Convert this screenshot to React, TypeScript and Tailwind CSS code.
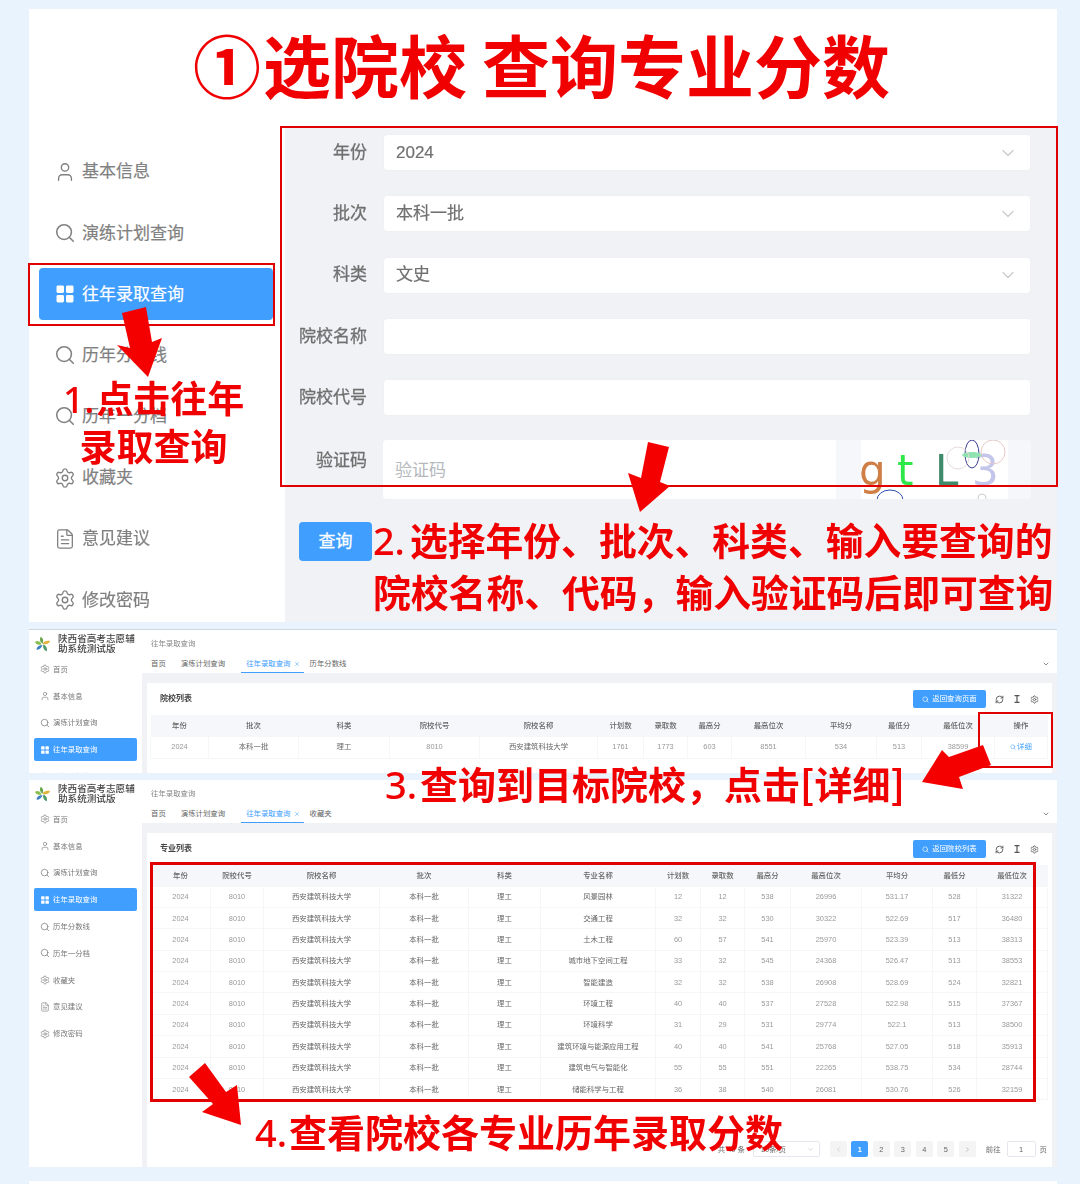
import React from 'react';
import { ChevronDown, ChevronLeft, ChevronRight, FileText, RefreshCw, Search, Settings, User, X } from 'lucide-react';

const SIDE_ITEMS = [
  { label: '基本信息', icon: 'user' },
  { label: '演练计划查询', icon: 'search' },
  { label: '往年录取查询', icon: 'grid', active: true },
  { label: '历年分数线', icon: 'search' },
  { label: '历年一分档', icon: 'search' },
  { label: '收藏夹', icon: 'gear' },
  { label: '意见建议', icon: 'file' },
  { label: '修改密码', icon: 'gear' },
];

const FORM_ROWS = [
  { label: '年份', value: '2024', select: true },
  { label: '批次', value: '本科一批', select: true },
  { label: '科类', value: '文史', select: true },
  { label: '院校名称', value: '' },
  { label: '院校代号', value: '' },
];

const SCHOOL_COLS = ['w-[58px]', 'w-[90px]', 'w-[91px]', 'w-[90px]', 'w-[118px]', 'w-[46px]', 'w-[44px]', 'w-[44px]', 'w-[74px]', 'w-[71px]', 'w-[45px]', 'w-[73px]', 'w-[53px]'];
const SCHOOL_HEAD = ['年份', '批次', '科类', '院校代号', '院校名称', '计划数', '录取数', '最高分', '最高位次', '平均分', '最低分', '最低位次', '操作'];
const SCHOOL_ROW = ['2024', '本科一批', '理工', '8010', '西安建筑科技大学', '1761', '1773', '603', '8551', '534', '513', '38599'];

const MAJOR_COLS = ['w-[60px]', 'w-[53px]', 'w-[116px]', 'w-[89px]', 'w-[72px]', 'w-[115px]', 'w-[45px]', 'w-[44px]', 'w-[46px]', 'w-[71px]', 'w-[71px]', 'w-[44px]', 'w-[71px]'];
const MAJOR_HEAD = ['年份', '院校代号', '院校名称', '批次', '科类', '专业名称', '计划数', '录取数', '最高分', '最高位次', '平均分', '最低分', '最低位次'];
const MAJORS = [
  ['风景园林', '12', '12', '538', '26996', '531.17', '528', '31322'],
  ['交通工程', '32', '32', '530', '30322', '522.69', '517', '36480'],
  ['土木工程', '60', '57', '541', '25970', '523.39', '513', '38313'],
  ['城市地下空间工程', '33', '32', '545', '24368', '526.47', '513', '38553'],
  ['智能建造', '32', '32', '538', '26908', '528.69', '524', '32821'],
  ['环境工程', '40', '40', '537', '27528', '522.98', '515', '37367'],
  ['环境科学', '31', '29', '531', '29774', '522.1', '513', '38500'],
  ['建筑环境与能源应用工程', '40', '40', '541', '25768', '527.05', '518', '35913'],
  ['建筑电气与智能化', '55', '55', '551', '22265', '538.75', '534', '28744'],
  ['储能科学与工程', '36', '38', '540', '26081', '530.76', '526', '32159'],
];

function GridIcon({ className }: { className: string }) {
  return (
    <svg viewBox="0 0 22 22" className={className} fill="currentColor">
      <rect x="2.5" y="2.5" width="7.5" height="7.5" rx="1.4" />
      <rect x="12" y="2.5" width="7.5" height="7.5" rx="1.4" />
      <rect x="2.5" y="12" width="7.5" height="7.5" rx="1.4" />
      <rect x="12" y="12" width="7.5" height="7.5" rx="1.4" />
    </svg>
  );
}

function SideIcon({ name, className }: { name: string; className: string }) {
  if (name === 'user') return <User className={className} strokeWidth={1.5} />;
  if (name === 'search') return <Search className={className} strokeWidth={1.7} />;
  if (name === 'gear') return <Settings className={className} strokeWidth={1.5} />;
  if (name === 'file') return <FileText className={className} strokeWidth={1.4} />;
  return <GridIcon className={className} />;
}

function Logo() {
  return (
    <svg viewBox="0 0 20 20" className="w-[17px] h-[19px] shrink-0">
      <path d="M10 9C7 7 6 4 8 1c2 1 4 4 2 8z" fill="#6aa84f" />
      <path d="M10 9c2-3 5-4 9-3-1 3-5 5-9 3z" fill="#e3b23c" />
      <path d="M11 10c3 1 5 4 4 8-3-1-5-4-4-8z" fill="#4c9a6a" />
      <path d="M10 11c-1 3-4 6-7 5 0-3 3-6 7-5z" fill="#3f7fc4" />
      <path d="M9 10C6 11 3 10 1 7c3-2 6-1 8 3z" fill="#8bbf4d" />
    </svg>
  );
}

function MiniSidebar() {
  const items = [{ label: '首页', icon: 'gear' }, ...SIDE_ITEMS];
  return (
    <div className="w-[113px] shrink-0 bg-white pt-[2px]">
      <div className="flex h-[24px] items-center gap-[7px] pl-[5px]">
        <Logo />
        <div className="text-[9.6px] leading-[10px] font-medium text-[#444]">
          陕西省高考志愿辅
          <br />
          助系统测试版
        </div>
      </div>
      <div>
        {items.map(item => (
          <div key={item.label} className="h-[26.8px] px-[5px] flex items-center">
            <div
              className={
                item.active
                  ? 'flex h-[23px] w-[103px] items-center gap-[3px] rounded-[2px] bg-[#409eff] pl-[6px] text-white'
                  : 'flex h-[23px] w-[103px] items-center gap-[3px] pl-[6px] text-[#777]'
              }
            >
              <SideIcon name={item.icon} className="w-[10px] h-[10px]" />
              <span className="text-[7.4px]">{item.label}</span>
            </div>
          </div>
        ))}
      </div>
    </div>
  );
}

function MiniPage({
  lastTab,
  heading,
  action,
  className,
  children,
}: {
  lastTab: string;
  heading: string;
  action: string;
  className: string;
  children: React.ReactNode;
}) {
  return (
    <div className={className}>
      <MiniSidebar />
      <div className="flex min-w-0 flex-1 flex-col bg-[#f0f2f5]">
        <div className="flex h-[24px] items-center bg-white pl-[9px] pt-[3px] text-[7.4px] text-[#888]">往年录取查询</div>
        <div className="relative flex h-[19px] items-center bg-white pl-[9px] text-[7.4px] text-[#666]">
          <span className="pt-[1px]">首页</span>
          <span className="ml-[15px] pt-[1px]">演练计划查询</span>
          <span className="ml-[16px] flex h-full items-center gap-[3px] border-b border-[#409eff] pl-[5px] pr-[4px] pt-[1px] text-[#409eff]">
            往年录取查询
            <X className="w-[6px] h-[6px]" />
          </span>
          <span className="ml-[6px] pt-[1px]">{lastTab}</span>
          <ChevronDown className="absolute right-[7px] top-[6px] w-[8px] h-[8px] text-[#555]" />
        </div>
        <div className="flex min-h-0 flex-1 flex-col px-[5px] pt-[10px]">
          <div className="flex-1 bg-white px-[3px]">
            <div className="flex h-[32px] items-center">
              <span className="ml-[10px] text-[8px] font-bold text-[#444]">{heading}</span>
              <div className="ml-auto flex items-center">
                <button className="flex h-[17.5px] w-[73px] items-center justify-center gap-[3px] rounded-[2px] bg-[#409eff] text-[7.4px] text-white">
                  <Search className="w-[7px] h-[7px]" />
                  {action}
                </button>
                <RefreshCw className="ml-[9px] w-[9px] h-[9px] text-[#555]" strokeWidth={2.4} />
                <svg viewBox="0 0 8 8" className="ml-[9px] w-[8px] h-[8px] text-[#555]" stroke="currentColor" strokeWidth="1.2">
                  <path d="M1.5 .6h5M4 .6v6.8M1.5 7.4h5" />
                </svg>
                <Settings className="ml-[9px] mr-[10px] w-[9px] h-[9px] text-[#555]" strokeWidth={2} />
              </div>
            </div>
            {children}
          </div>
        </div>
      </div>
    </div>
  );
}

function HeadCell({ children }: { children: React.ReactNode }) {
  return <th className="h-[21px] bg-[#f5f7fa] p-0 text-center text-[7.4px] font-medium text-[#666]">{children}</th>;
}

function SchoolTable() {
  return (
    <table className="w-[897px] table-fixed border-collapse">
      <colgroup>
        {SCHOOL_COLS.map((c, i) => (
          <col key={i} className={c} />
        ))}
      </colgroup>
      <thead>
        <tr>
          {SCHOOL_HEAD.map(h => (
            <HeadCell key={h}>{h}</HeadCell>
          ))}
        </tr>
      </thead>
      <tbody>
        <tr>
          {SCHOOL_ROW.map((v, i) => (
            <td
              key={i}
              className={
                /^[\d.]+$/.test(v)
                  ? 'h-[22px] border border-[#f5f6f8] p-0 text-center text-[7.4px] text-[#999]'
                  : 'h-[22px] border border-[#f5f6f8] p-0 text-center text-[7.4px] text-[#666]'
              }
            >
              {v}
            </td>
          ))}
          <td className="h-[22px] border border-[#f5f6f8] p-0 text-center text-[7.4px] text-[#409eff]">
            <span className="inline-flex items-center gap-[1px]">
              <Search className="w-[6px] h-[6px]" />
              详细
            </span>
          </td>
        </tr>
      </tbody>
    </table>
  );
}

function MajorTable() {
  return (
    <table className="w-[897px] table-fixed border-collapse">
      <colgroup>
        {MAJOR_COLS.map((c, i) => (
          <col key={i} className={c} />
        ))}
      </colgroup>
      <thead>
        <tr>
          {MAJOR_HEAD.map(h => (
            <HeadCell key={h}>{h}</HeadCell>
          ))}
        </tr>
      </thead>
      <tbody>
        {MAJORS.map(m => (
          <tr key={m[0]}>
            {['2024', '8010', '西安建筑科技大学', '本科一批', '理工', ...m].map((v, i) => (
              <td
                key={i}
                className={
                  /^[\d.]+$/.test(v)
                    ? 'h-[21.4px] border border-[#f5f6f8] p-0 text-center text-[7.4px] text-[#999]'
                    : 'h-[21.4px] border border-[#f5f6f8] p-0 text-center text-[7.4px] text-[#666]'
                }
              >
                {v}
              </td>
            ))}
          </tr>
        ))}
      </tbody>
    </table>
  );
}

function Pager() {
  const boxCls = 'flex h-[16px] w-[17px] items-center justify-center rounded-[2px] bg-[#f4f4f5] text-[7.4px] text-[#606266]';
  return (
    <div className="mt-[41px] flex h-[16px] items-center justify-end text-[7.4px] text-[#666]">
      <span>共 40 条</span>
      <div className="ml-[8px] flex h-[16px] w-[67px] items-center justify-between rounded-[2px] border border-[#e4e7ed] pl-[7px] pr-[5px]">
        <span>10条/页</span>
        <ChevronDown className="w-[7px] h-[7px] text-[#bbb]" />
      </div>
      <div className="ml-[10px] flex items-center gap-[4.5px]">
        <div className={boxCls}>
          <ChevronLeft className="w-[7px] h-[7px] text-[#bbb]" />
        </div>
        <div className="flex h-[16px] w-[17px] items-center justify-center rounded-[2px] bg-[#409eff] text-[7.4px] font-bold text-white">1</div>
        {['2', '3', '4', '5'].map(n => (
          <div key={n} className={boxCls}>
            {n}
          </div>
        ))}
        <div className={boxCls}>
          <ChevronRight className="w-[7px] h-[7px] text-[#999]" />
        </div>
      </div>
      <span className="ml-[10px]">前往</span>
      <div className="ml-[6px] flex h-[16px] w-[29px] items-center justify-center rounded-[2px] border border-[#e4e7ed]">1</div>
      <span className="ml-[4px] mr-[2px]">页</span>
    </div>
  );
}

function Captcha() {
  return (
    <svg viewBox="0 0 147 61" className="ml-[25px] h-[61px] w-[147px] -mt-[1px] bg-white">
      <text x="-2" y="46" fontSize="42" fontFamily="DejaVu Sans, sans-serif" fill="#cf7f45">g</text>
      <text x="36" y="46" fontSize="42" fontFamily="DejaVu Sans, sans-serif" fill="#2ee84a">t</text>
      <text x="74" y="46" fontSize="42" fontFamily="DejaVu Sans, sans-serif" fill="#3f8a6a">L</text>
      <text x="111" y="46" fontSize="42" fontFamily="DejaVu Sans, sans-serif" fill="#c3c6ea">3</text>
      <ellipse cx="111" cy="15" rx="7" ry="14" fill="none" stroke="#3b3f8f" />
      <ellipse cx="111" cy="16" rx="10" ry="3" fill="#8fe3b0" />
      <circle cx="97" cy="19" r="11" fill="none" stroke="#e6d9d9" />
      <circle cx="132" cy="13" r="12" fill="none" stroke="#e8c8c8" />
      <ellipse cx="29" cy="61" rx="13" ry="10" fill="none" stroke="#3050b0" />
      <circle cx="121" cy="59" r="4" fill="none" stroke="#ccc" />
    </svg>
  );
}

const RED = 'text-[#f00000]';
const ANNOT_FONT = "font-['Noto_Sans_CJK_SC',sans-serif] font-bold whitespace-nowrap";
const NUM = "font-['Noto_Sans',sans-serif] font-medium pr-[2px]";

export default function App() {
  return (
    <div className="relative h-[1184px] w-[1080px] overflow-hidden bg-[#e8f3fd] font-['Liberation_Sans','Noto_Sans_CJK_SC',sans-serif]">
      <div className="blur-[0.5px] pl-[29px] pr-[23px] pt-[9px]">
        {/* 上半部分：查询表单 */}
        <div className="flex h-[613px] flex-col bg-white">
          <div className="h-[118px] shrink-0" />
          <div className="flex min-h-0 flex-1">
            <div className="w-[256px] shrink-0 pt-[14px]">
              {SIDE_ITEMS.map(item => (
                <div key={item.label} className="flex h-[61.2px] items-center px-[10px]">
                  <div
                    className={
                      item.active
                        ? 'flex h-[52px] w-[234px] items-center gap-[6px] rounded-[4px] bg-[#409eff] pl-[15px] text-white'
                        : 'flex h-[52px] w-[234px] items-center gap-[6px] pl-[15px] text-[#808080]'
                    }
                  >
                    <SideIcon name={item.icon} className="w-[22px] h-[22px]" />
                    <span className="pt-[1px] text-[17px] [-webkit-text-stroke:0.2px]">{item.label}</span>
                  </div>
                </div>
              ))}
            </div>
            <div className="flex-1 bg-[#f0f2f5] pl-[14px] pr-[26px] pt-[7px]">
              {FORM_ROWS.map(row => (
                <div key={row.label} className="mb-[24.3px] flex h-[37px] items-center gap-[16px]">
                  <label className="w-[68px] text-right text-[17px] text-[#707070] [-webkit-text-stroke:0.3px]">{row.label}</label>
                  <div className="flex h-full flex-1 items-center justify-between rounded-[4px] border border-[#eef0f3] bg-white pl-[12px] pr-[12px] text-[17px] text-[#707070]">
                    <span className="[-webkit-text-stroke:0.2px]">{row.value}</span>
                    {row.select && <ChevronDown className="w-[20px] h-[20px] text-[#ccc]" strokeWidth={1.6} />}
                  </div>
                </div>
              ))}
              <div className="flex h-[59px] gap-[16px]">
                <label className="mt-[8px] w-[68px] text-right text-[17px] text-[#707070] [-webkit-text-stroke:0.3px]">验证码</label>
                <div className="flex h-full flex-1 overflow-hidden rounded-[4px] bg-[#f5f7fa]">
                  <div className="flex w-[453px] items-center bg-white pl-[12px] pt-[2px] text-[17px] text-[#b5b8bd]">验证码</div>
                  <Captcha />
                </div>
              </div>
              <button className="mt-[23px] h-[39px] w-[73px] rounded-[4px] bg-[#409eff] text-[17px] text-white [-webkit-text-stroke:0.3px]">查询</button>
            </div>
          </div>
        </div>

        {/* 院校列表截图 */}
        <MiniPage
          lastTab="历年分数线"
          heading="院校列表"
          action="返回查询页面"
          className="mt-[7px] flex h-[144px] overflow-hidden border-t border-[#cfd6dc]"
        >
          <SchoolTable />
        </MiniPage>

        {/* 专业列表截图 */}
        <MiniPage
          lastTab="收藏夹"
          heading="专业列表"
          action="返回院校列表"
          className="mt-[7px] flex h-[387px] overflow-hidden"
        >
          <MajorTable />
          <Pager />
        </MiniPage>
        <div className="mt-[14px] h-[3px] bg-white" />
      </div>

      {/* 红色标注层 */}
      <div className={`absolute left-[195px] top-[17px] flex items-center text-[68px] leading-[94px] ${RED} ${ANNOT_FONT}`}>
        <span className="-ml-[2px] mr-[2px]">①</span>
        <span>选院校</span>
        <span className="ml-[15px]">查询专业分数</span>
      </div>

      <div className="absolute left-[28px] top-[263px] h-[63px] w-[247px] border-2 border-[#e00000]" />
      <div className="absolute left-[280px] top-[126px] h-[361px] w-[778px] border-2 border-[#e00000]" />
      <div className="absolute left-[978px] top-[712px] h-[56px] w-[75px] border-2 border-[#e00000]" />
      <div className="absolute left-[150px] top-[862px] h-[240px] w-[886px] border-[3px] border-[#e00000]" />

      <div className={`absolute left-[63px] top-[374px] text-center text-[37px] leading-[46px] ${RED} ${ANNOT_FONT}`}>
        <span className={NUM}>1.</span>点击往年
        <br />
        录取查询
      </div>
      <div className={`absolute left-[373px] top-[514px] text-[37.8px] leading-[49.5px] ${RED} ${ANNOT_FONT}`}>
        <span className="font-['Noto_Sans',sans-serif] font-medium pr-[5px]">2.</span>选择年份、批次、科类、输入要查询的
        <br />
        院校名称、代码，输入验证码后即可查询
      </div>
      <div className={`absolute left-[385px] top-[758px] text-[38px] leading-[50px] ${RED} ${ANNOT_FONT}`}>
        <span className="font-['Noto_Sans',sans-serif] font-medium pr-[3px]">3.</span>查询到目标院校，点击[详细]
      </div>
      <div className={`absolute left-[255px] top-[1106px] text-[38px] leading-[50px] ${RED} ${ANNOT_FONT}`}>
        <span className={NUM}>4.</span>查看院校各专业历年录取分数
      </div>

      {/* 箭头 */}
      <svg viewBox="0 0 1080 1184" className="pointer-events-none absolute inset-0 h-[1184px] w-[1080px]" fill="#f50000">
        <polygon points="122,313 146,307 152,342 162,338 148,377 117,345 130,348" />
        <polygon points="648,442 669,447 660,482 670,486 640,512 628,473 641,478" />
        <polygon points="983,745 991,765 959,777 963,789 922,782 942,750 949,757" />
        <polygon points="205,1063 189,1077 213,1104 202,1112 241,1125 237,1085 226,1092" />
      </svg>
    </div>
  );
}
